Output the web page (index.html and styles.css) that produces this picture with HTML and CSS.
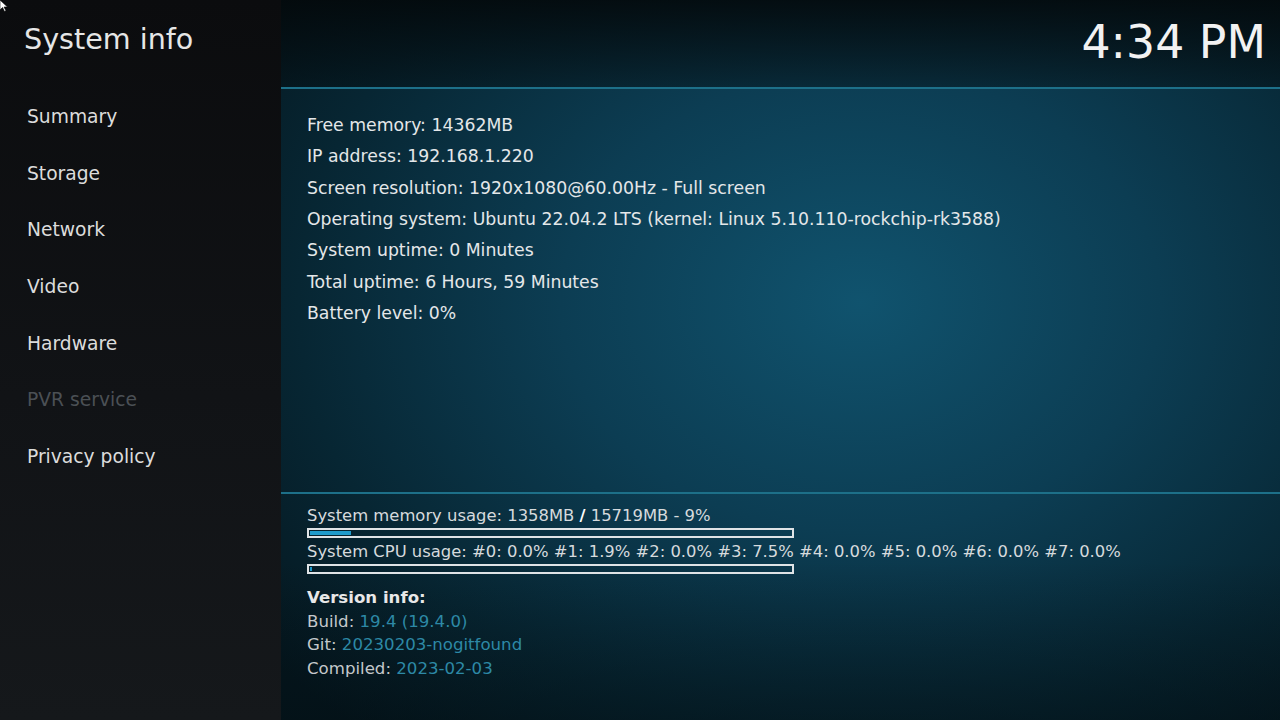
FILE: index.html
```html
<!DOCTYPE html>
<html lang="en">
<head>
  <meta charset="UTF-8" />
  <meta name="viewport" content="width=device-width, initial-scale=1.0"/>
  <title>System info</title>
  <link rel="stylesheet" href="styles.css">
</head>
<body>

  <aside class="sidebar">
    <h1 class="sidebar-title">System info</h1>
    <ul class="menu">
      <li class="menu-item">Summary</li>
      <li class="menu-item">Storage</li>
      <li class="menu-item">Network</li>
      <li class="menu-item">Video</li>
      <li class="menu-item">Hardware</li>
      <li class="menu-item disabled">PVR service</li>
      <li class="menu-item">Privacy policy</li>
    </ul>
  </aside>

  <main class="content">
    <header class="topbar">
      <div class="clock">4:34 PM</div>
    </header>

    <section class="info-list">
      <div class="info-line">Free memory: 14362MB</div>
      <div class="info-line">IP address: 192.168.1.220</div>
      <div class="info-line">Screen resolution: 1920x1080@60.00Hz - Full screen</div>
      <div class="info-line">Operating system: Ubuntu 22.04.2 LTS (kernel: Linux 5.10.110-rockchip-rk3588)</div>
      <div class="info-line">System uptime: 0 Minutes</div>
      <div class="info-line">Total uptime: 6 Hours, 59 Minutes</div>
      <div class="info-line">Battery level: 0%</div>
    </section>

    <section class="usage">
      <div class="usage-label">System memory usage: 1358MB <b>/</b> 15719MB - 9%</div>
      <div class="progress"><div class="progress-fill" style="width: 8.5%;"></div></div>

      <div class="usage-label">System CPU usage: #0: 0.0% #1: 1.9% #2: 0.0% #3: 7.5% #4: 0.0% #5: 0.0% #6: 0.0% #7: 0.0%</div>
      <div class="progress"><div class="progress-fill" style="width: 0.4%;"></div></div>

      <div class="version">
        <div class="version-title">Version info:</div>
        <div class="version-line">Build: <span class="value">19.4 (19.4.0)</span></div>
        <div class="version-line">Git: <span class="value">20230203-nogitfound</span></div>
        <div class="version-line">Compiled: <span class="value">2023-02-03</span></div>
      </div>
    </section>
  </main>

  <svg class="cursor" width="8" height="12" viewBox="0 0 8 12">
    <path d="M0 0 L0 10 L2.5 7.5 L4.5 11.5 L6 10.8 L4 7 L7.5 7 Z" fill="#ffffff" stroke="#000" stroke-width="0.6"/>
  </svg>

</body>
</html>
```

FILE: styles.css
```css
* {
  box-sizing: border-box;
  font-family: 'DejaVu Sans', 'Liberation Sans', sans-serif;
}

html, body {
  height: 100%;
}

body {
  margin: 0;
  padding: 0;
  display: flex;
  overflow: hidden;
  background: #06141a;
}

/* left menu */
.sidebar {
  width: 281px;
  flex-shrink: 0;
  background: linear-gradient(180deg, #0b0c0e 0%, #111316 55%, #15181b 100%);
}

.sidebar-title {
  margin: 0;
  height: 89px;
  padding: 20px 0 0 24px;
  font-size: 28.6px;
  font-weight: normal;
  line-height: 38px;
  color: #e6e6e6;
}

.menu {
  list-style: none;
  margin: 0;
  padding: 0;
}

.menu-item {
  height: 56.67px;
  line-height: 56.67px;
  padding-left: 27px;
  font-size: 18.7px;
  color: #dcdcdc;
}

.menu-item.disabled {
  color: #4b5055;
}

/* right side */
.content {
  flex: 1;
  display: flex;
  flex-direction: column;
  background:
    radial-gradient(ellipse 75% 80% at 58% 42%, #10536e 0%, #0c3d53 40%, #072633 75%, #05171f 100%);
}

.topbar {
  height: 89px;
  flex-shrink: 0;
  display: flex;
  justify-content: flex-end;
  padding-right: 14px;
  border-bottom: 2px solid #1d7089;
  background: linear-gradient(180deg, rgba(3, 8, 10, 0.88) 0%, rgba(3, 10, 13, 0.4) 100%);
}

.clock {
  font-size: 45.8px;
  line-height: 84px;
  color: #f2f2f2;
}

.info-list {
  flex: 1;
  padding: 21px 0 0 26px;
}

.info-line {
  font-size: 17.3px;
  line-height: 31.33px;
  color: #e4e7e9;
}

.usage {
  flex-shrink: 0;
  height: 228px;
  padding: 11px 0 0 26px;
  border-top: 2px solid #1d7089;
  background: linear-gradient(180deg, rgba(0, 0, 0, 0) 30%, rgba(2, 12, 16, 0.45) 100%);
}

.usage-label {
  font-size: 16.4px;
  line-height: 22px;
  color: #d6dadd;
}

.usage-label b {
  color: #ffffff;
}

.progress {
  width: 487px;
  height: 10px;
  margin-top: 1px;
  border: 2px solid #dfe3e6;
  padding: 1px;
}

.progress + .usage-label {
  margin-top: 3px;
}

.progress-fill {
  height: 100%;
  background: #1f9bcb;
}

.version {
  margin-top: 12px;
}

.version-title {
  font-size: 16.6px;
  font-weight: bold;
  line-height: 23.5px;
  color: #e8e8e8;
}

.version-line {
  font-size: 16.6px;
  line-height: 23.5px;
  color: #c4c8cb;
}

.version-line .value {
  color: #2d89a6;
}

.cursor {
  position: absolute;
  top: 0;
  left: 0;
}
```
